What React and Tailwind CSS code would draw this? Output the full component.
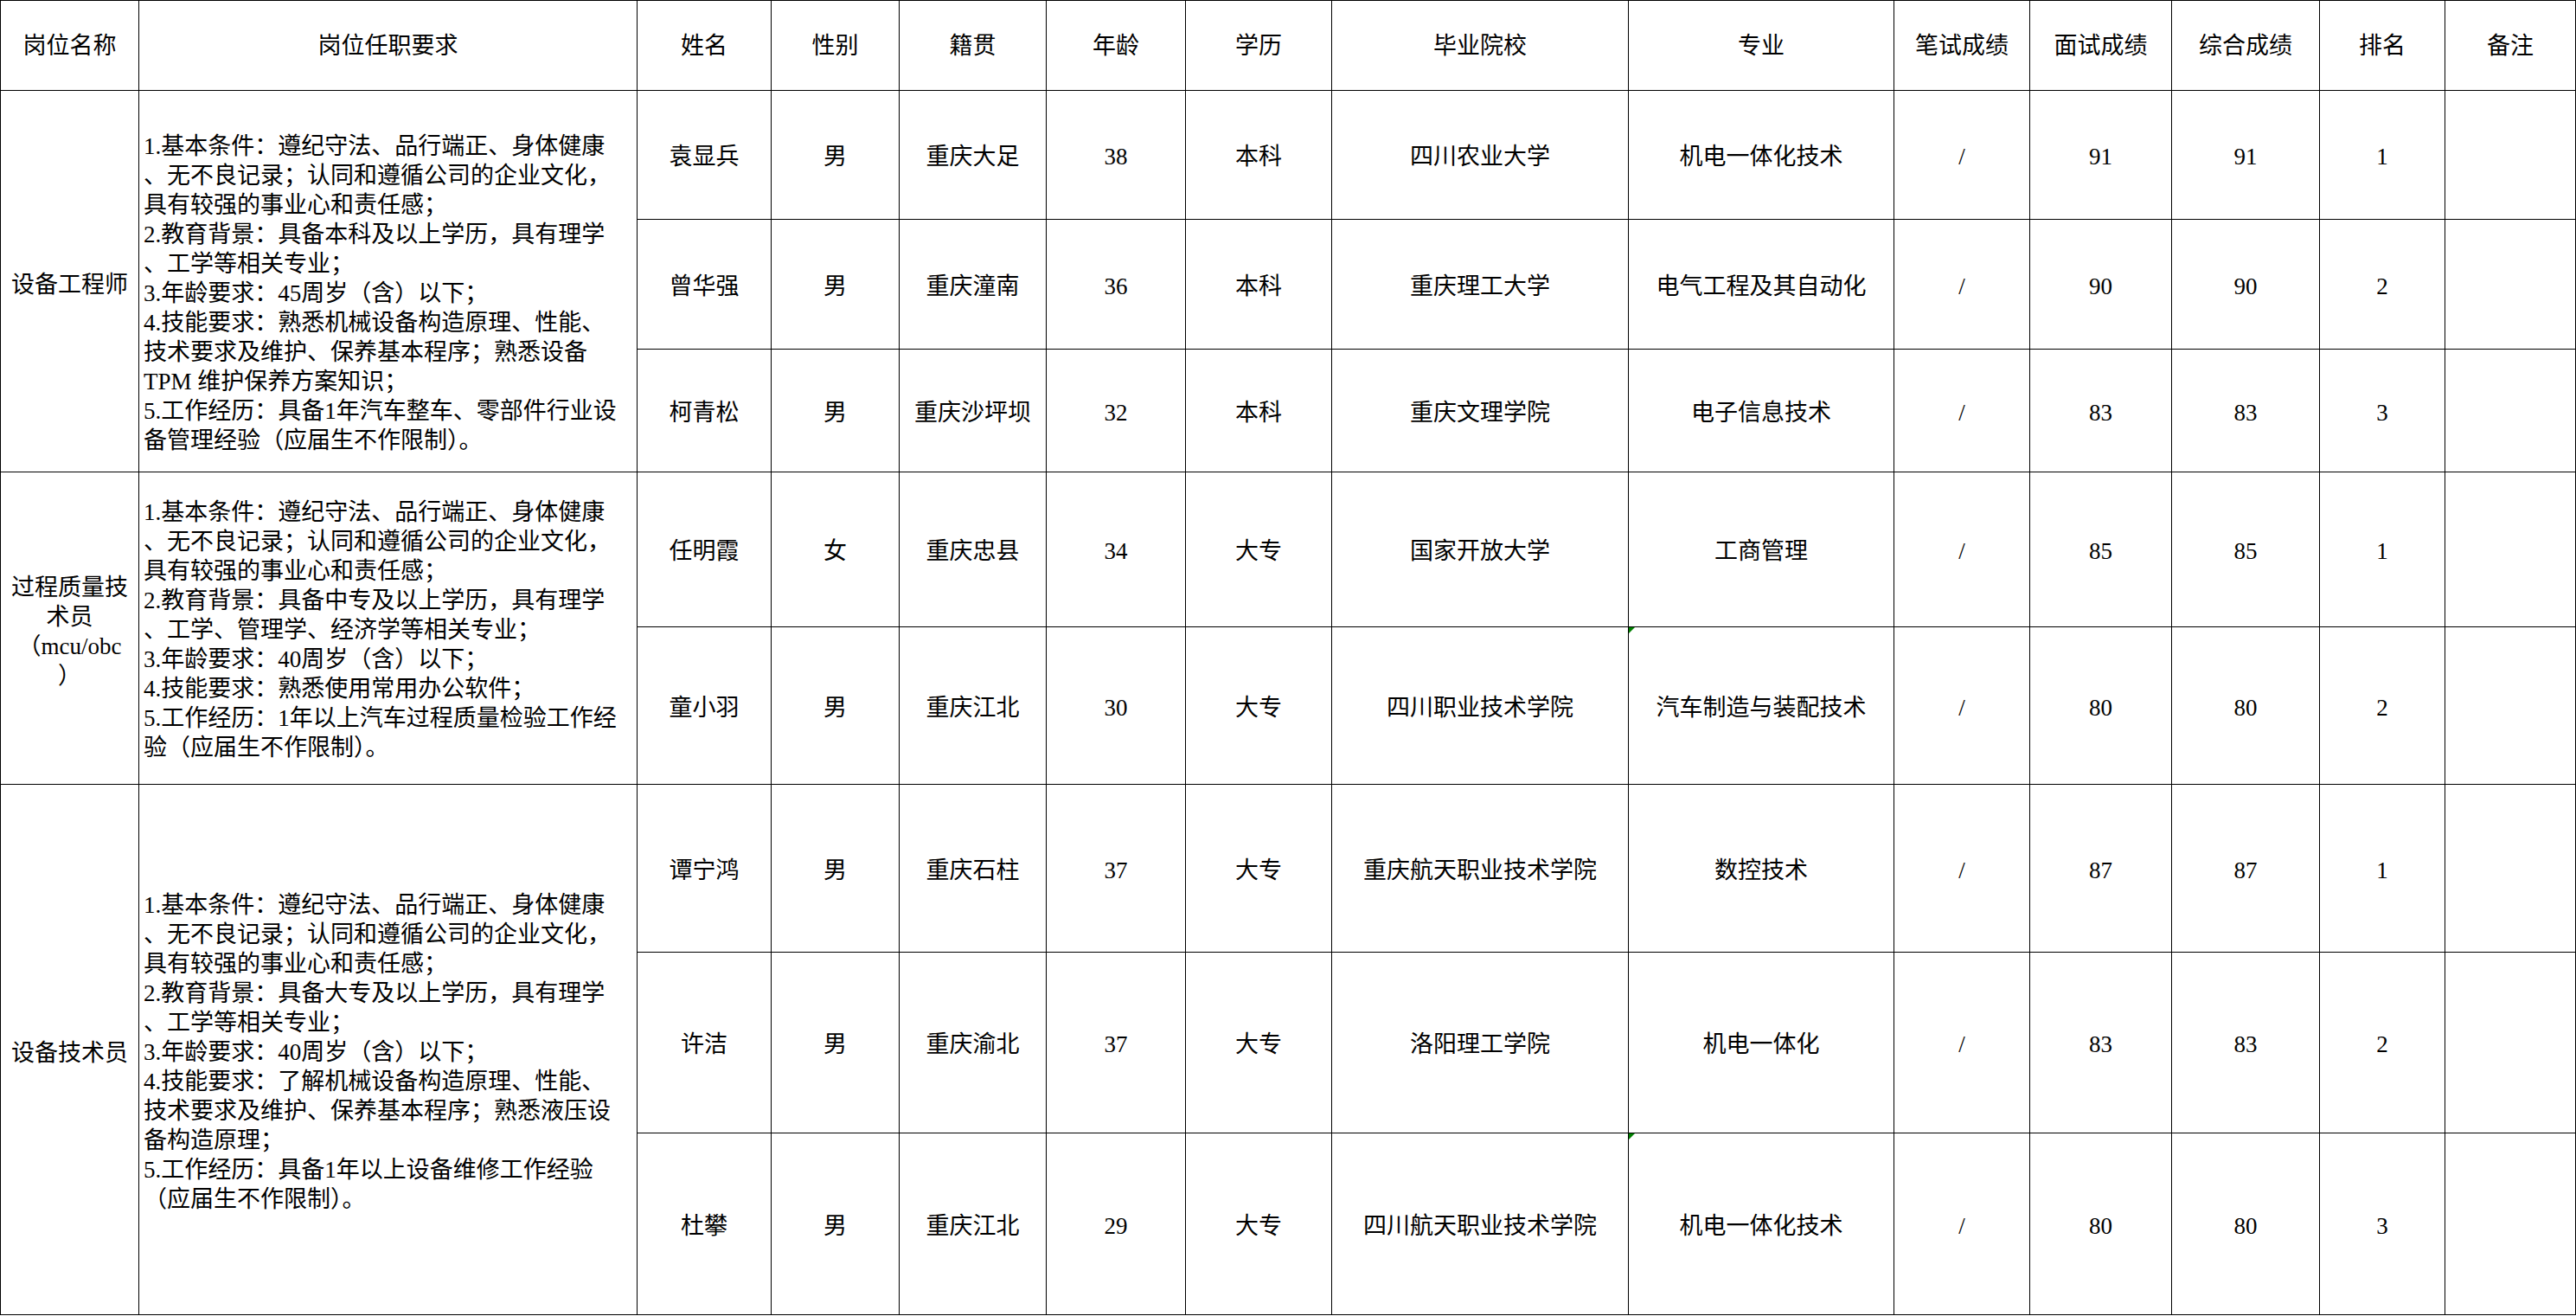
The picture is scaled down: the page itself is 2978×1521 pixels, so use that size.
import React from "react";

const headers = [
  "岗位名称",
  "岗位任职要求",
  "姓名",
  "性别",
  "籍贯",
  "年龄",
  "学历",
  "毕业院校",
  "专业",
  "笔试成绩",
  "面试成绩",
  "综合成绩",
  "排名",
  "备注",
];

const groups = [
  {
    name: ["设备工程师"],
    pad: "pt-[28px]",
    req: [
      "1.基本条件：遵纪守法、品行端正、身体健康",
      "、无不良记录；认同和遵循公司的企业文化，",
      "具有较强的事业心和责任感；",
      "2.教育背景：具备本科及以上学历，具有理学",
      "、工学等相关专业；",
      "3.年龄要求：45周岁（含）以下；",
      "4.技能要求：熟悉机械设备构造原理、性能、",
      "技术要求及维护、保养基本程序；熟悉设备",
      "TPM 维护保养方案知识；",
      "5.工作经历：具备1年汽车整车、零部件行业设",
      "备管理经验（应届生不作限制）。",
    ],
    rows: [
      { h: "h-[149px]", d: ["袁显兵", "男", "重庆大足", "38", "本科", "四川农业大学", "机电一体化技术", "/", "91", "91", "1", ""] },
      { h: "h-[150px]", d: ["曾华强", "男", "重庆潼南", "36", "本科", "重庆理工大学", "电气工程及其自动化", "/", "90", "90", "2", ""] },
      { h: "h-[142px]", d: ["柯青松", "男", "重庆沙坪坝", "32", "本科", "重庆文理学院", "电子信息技术", "/", "83", "83", "3", ""] },
    ],
  },
  {
    name: ["过程质量技", "术员", "（mcu/obc", "）"],
    pad: "pt-[4px]",
    req: [
      "1.基本条件：遵纪守法、品行端正、身体健康",
      "、无不良记录；认同和遵循公司的企业文化，",
      "具有较强的事业心和责任感；",
      "2.教育背景：具备中专及以上学历，具有理学",
      "、工学、管理学、经济学等相关专业；",
      "3.年龄要求：40周岁（含）以下；",
      "4.技能要求：熟悉使用常用办公软件；",
      "5.工作经历：1年以上汽车过程质量检验工作经",
      "验（应届生不作限制）。",
    ],
    rows: [
      { h: "h-[179px]", d: ["任明霞", "女", "重庆忠县", "34", "大专", "国家开放大学", "工商管理", "/", "85", "85", "1", ""] },
      { h: "h-[182px]", mark: true, d: ["童小羽", "男", "重庆江北", "30", "大专", "四川职业技术学院", "汽车制造与装配技术", "/", "80", "80", "2", ""] },
    ],
  },
  {
    name: ["设备技术员"],
    pad: "pt-[6px]",
    req: [
      "1.基本条件：遵纪守法、品行端正、身体健康",
      "、无不良记录；认同和遵循公司的企业文化，",
      "具有较强的事业心和责任感；",
      "2.教育背景：具备大专及以上学历，具有理学",
      "、工学等相关专业；",
      "3.年龄要求：40周岁（含）以下；",
      "4.技能要求：了解机械设备构造原理、性能、",
      "技术要求及维护、保养基本程序；熟悉液压设",
      "备构造原理；",
      "5.工作经历：具备1年以上设备维修工作经验",
      "（应届生不作限制）。",
    ],
    rows: [
      { h: "h-[194px]", d: ["谭宁鸿", "男", "重庆石柱", "37", "大专", "重庆航天职业技术学院", "数控技术", "/", "87", "87", "1", ""] },
      { h: "h-[209px]", d: ["许洁", "男", "重庆渝北", "37", "大专", "洛阳理工学院", "机电一体化", "/", "83", "83", "2", ""] },
      { h: "h-[210px]", mark: true, d: ["杜攀", "男", "重庆江北", "29", "大专", "四川航天职业技术学院", "机电一体化技术", "/", "80", "80", "3", ""] },
    ],
  },
];

const cell = "border border-black text-center align-middle p-0";

export default function App() {
  return (
    <div className="bg-white w-[2978px] h-[1521px] overflow-hidden text-black font-['Liberation_Serif','Noto_Sans_CJK_SC',serif] text-[27px] leading-[34px]">
      <table className="table-fixed border-collapse w-[2977px]">
        <colgroup>
          <col className="w-[160px]" />
          <col className="w-[576px]" />
          <col className="w-[155px]" />
          <col className="w-[148px]" />
          <col className="w-[170px]" />
          <col className="w-[161px]" />
          <col className="w-[169px]" />
          <col className="w-[343px]" />
          <col className="w-[307px]" />
          <col className="w-[157px]" />
          <col className="w-[164px]" />
          <col className="w-[171px]" />
          <col className="w-[145px]" />
          <col className="w-[151px]" />
        </colgroup>
        <thead>
          <tr className="h-[104px]">
            {headers.map((h) => (
              <th key={h} className={`${cell} font-normal`}>
                {h}
              </th>
            ))}
          </tr>
        </thead>
        <tbody>
          {groups.map((g, gi) =>
            g.rows.map((r, ri) => (
              <tr key={`${gi}-${ri}`} className={r.h}>
                {ri === 0 && (
                  <td rowSpan={g.rows.length} className={`${cell} pt-[8px]`}>
                    {g.name.map((n) => (
                      <div key={n} className="whitespace-nowrap">
                        {n}
                      </div>
                    ))}
                  </td>
                )}
                {ri === 0 && (
                  <td rowSpan={g.rows.length} className={`border border-black align-middle text-left pl-[5px] ${g.pad}`}>
                    {g.req.map((line, li) => (
                      <div key={li} className="whitespace-nowrap">
                        {line}
                      </div>
                    ))}
                  </td>
                )}
                {r.d.map((v, ci) => (
                  <td key={ci} className={`${cell} pt-[4px] ${ci === 6 ? "relative" : ""}`}>
                    {ci === 6 && r.mark && (
                      <span className="absolute left-0 top-0 w-0 h-0 border-t-[7px] border-r-[7px] border-t-[#008000] border-r-transparent" />
                    )}
                    <span className="whitespace-nowrap">{v}</span>
                  </td>
                ))}
              </tr>
            ))
          )}
        </tbody>
      </table>
    </div>
  );
}
